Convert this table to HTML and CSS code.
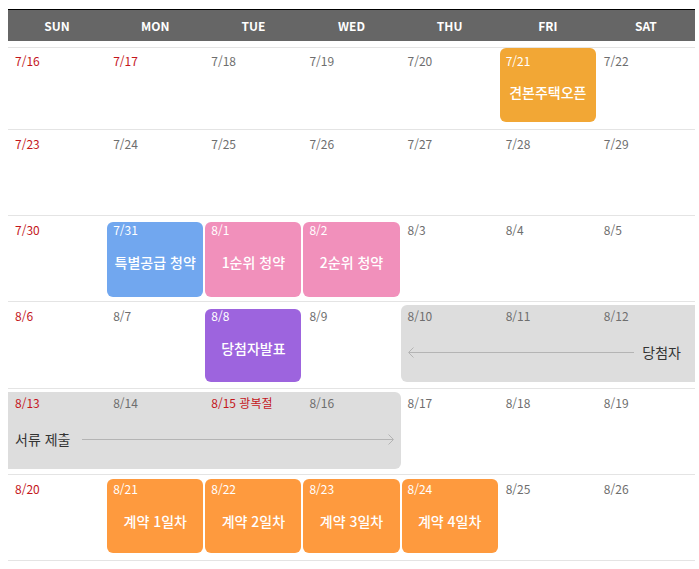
FILE: index.html
```html
<!DOCTYPE html>
<html lang="ko">
<head>
<meta charset="utf-8">
<title>일정</title>
<link rel="stylesheet" href="styles.css">
</head>
<body>
<div class="cal">
  <div class="head">
    <div>SUN</div><div>MON</div><div>TUE</div><div>WED</div><div>THU</div><div>FRI</div><div>SAT</div>
  </div>

  <div class="week w1">
    <div class="box c6 gold"></div>
    <div class="days">
      <div class="day red">7/16</div>
      <div class="day red">7/17</div>
      <div class="day">7/18</div>
      <div class="day">7/19</div>
      <div class="day">7/20</div>
      <div class="day ev"><span class="date">7/21</span><span class="title">견본주택오픈</span></div>
      <div class="day">7/22</div>
    </div>
  </div>

  <div class="week w2">
    <div class="days">
      <div class="day red">7/23</div>
      <div class="day">7/24</div>
      <div class="day">7/25</div>
      <div class="day">7/26</div>
      <div class="day">7/27</div>
      <div class="day">7/28</div>
      <div class="day">7/29</div>
    </div>
  </div>

  <div class="week w3">
    <div class="box c2 blue"></div>
    <div class="box c3 pink"></div>
    <div class="box c4 pink"></div>
    <div class="days">
      <div class="day red">7/30</div>
      <div class="day ev"><span class="date">7/31</span><span class="title">특별공급 청약</span></div>
      <div class="day ev"><span class="date">8/1</span><span class="title">1순위 청약</span></div>
      <div class="day ev"><span class="date">8/2</span><span class="title">2순위 청약</span></div>
      <div class="day">8/3</div>
      <div class="day">8/4</div>
      <div class="day">8/5</div>
    </div>
  </div>

  <div class="week w4">
    <div class="box c3 purple"></div>
    <div class="bar bar-right">
      <div class="arrow">
        <svg class="head-l" width="6" height="11" viewBox="0 0 6 11"><polyline points="5.5,0.5 0.5,5.5 5.5,10.5" fill="none" stroke="#b4b4b4" stroke-width="1"/></svg>
        <div class="ln ln-l"></div>
      </div>
      <span class="label label-r">당첨자</span>
    </div>
    <div class="days">
      <div class="day red">8/6</div>
      <div class="day">8/7</div>
      <div class="day ev"><span class="date">8/8</span><span class="title">당첨자발표</span></div>
      <div class="day">8/9</div>
      <div class="day">8/10</div>
      <div class="day">8/11</div>
      <div class="day">8/12</div>
    </div>
  </div>

  <div class="week w5">
    <div class="bar bar-left">
      <span class="label">서류 제출</span>
      <div class="arrow arrow-r">
        <div class="ln ln-r"></div>
        <svg class="head-r" width="6" height="11" viewBox="0 0 6 11"><polyline points="0.5,0.5 5.5,5.5 0.5,10.5" fill="none" stroke="#b4b4b4" stroke-width="1"/></svg>
      </div>
    </div>
    <div class="days">
      <div class="day red">8/13</div>
      <div class="day">8/14</div>
      <div class="day red">8/15 광복절</div>
      <div class="day">8/16</div>
      <div class="day">8/17</div>
      <div class="day">8/18</div>
      <div class="day">8/19</div>
    </div>
  </div>

  <div class="week w6">
    <div class="box c2 orange"></div>
    <div class="box c3 orange"></div>
    <div class="box c4 orange"></div>
    <div class="box c5 orange"></div>
    <div class="days">
      <div class="day red">8/20</div>
      <div class="day ev"><span class="date">8/21</span><span class="title">계약 1일차</span></div>
      <div class="day ev"><span class="date">8/22</span><span class="title">계약 2일차</span></div>
      <div class="day ev"><span class="date">8/23</span><span class="title">계약 3일차</span></div>
      <div class="day ev"><span class="date">8/24</span><span class="title">계약 4일차</span></div>
      <div class="day">8/25</div>
      <div class="day">8/26</div>
    </div>
  </div>
</div>
</body>
</html>
```

FILE: styles.css
```css
html, body {
  margin: 0;
  padding: 0;
  background: #fff;
  overflow: hidden;
}
body {
  padding: 9px 0 0 8px;
  font-family: "Noto Sans CJK KR", "Noto Sans", sans-serif;
}
.cal {
  width: 687px;
}
.head {
  display: grid;
  grid-template-columns: repeat(7, 1fr);
  background: #666;
  border-top: 1px solid #000;
  height: 31px;
  margin-bottom: 6px;
}
.head div {
  color: #fff;
  font-weight: 700;
  font-size: 12px;
  line-height: 31px;
  text-align: center;
}
.week {
  display: grid;
  grid-template-columns: repeat(7, 1fr);
  grid-template-rows: 85px;
  border-top: 1px solid #e4e4e4;
}
.w1 { grid-template-rows: 81px; }
.w4 { grid-template-rows: 86px; }
.w6 { border-bottom: 1px solid #e4e4e4; }

.days {
  grid-row: 1;
  grid-column: 1 / 8;
  display: grid;
  grid-template-columns: repeat(7, 1fr);
  position: relative;
  z-index: 1;
}
.w1 .days { margin-top: -1px; }
.day {
  padding: 6px 7px 0;
  font-size: 12px;
  line-height: 16px;
  color: #6e6e6e;
  white-space: nowrap;
}
.day.red { color: #c4161c; }
.day.ev { color: #fff; }
.date { display: block; }
.title {
  display: block;
  margin: 14px -7px 0;
  text-align: center;
  font-size: 14px;
  line-height: 20px;
  font-weight: 500;
  color: #fff;
}
.w1 .title { margin-top: 13px; }

.box {
  grid-row: 1;
  align-self: start;
  border-radius: 6px;
  margin: 4px 1px 0 1px;
  height: 74px;
}
.w1 .box { margin-top: 0; }
.w3 .box { margin-top: 6px; height: 75px; }
.w4 .box { margin-top: 7px; height: 73px; }
.c2 { grid-column: 2; }
.c3 { grid-column: 3; }
.c4 { grid-column: 4; }
.c5 { grid-column: 5; }
.c6 { grid-column: 6; }

.gold { background: #f2a735; }
.blue { background: #71a7ef; }
.pink { background: #f190bb; }
.purple { background: #9d64de; }
.orange { background: #fe9a3e; }

.bar {
  grid-row: 1;
  align-self: start;
  margin-top: 3px;
  height: 77px;
  box-sizing: border-box;
  background: #dddddd;
  display: flex;
  align-items: center;
  align-content: flex-start;
  flex-wrap: wrap;
  padding-top: 37px;
}
.bar-right {
  grid-column: 5 / 8;
  border-radius: 6px 0 0 6px;
  padding-left: 7px;
  padding-right: 14px;
  flex-wrap: nowrap;
  align-items: flex-start;
}
.bar-left {
  grid-column: 1 / 5;
  border-radius: 0 6px 6px 0;
  padding-left: 7px;
  padding-right: 7px;
  flex-wrap: nowrap;
  align-items: flex-start;
}
.label {
  font-size: 14px;
  line-height: 20px;
  color: #333;
  white-space: nowrap;
}
.label-r { margin-left: 8px; }
.arrow {
  flex: 1;
  display: flex;
  align-items: center;
  height: 11px;
  margin-top: 5px;
}
.arrow-r { margin-left: 12px; }
.arrow svg { display: block; flex: none; }
.ln {
  flex: 1;
  height: 1px;
  background: #b4b4b4;
}
.ln-l { margin-left: -5px; }
.ln-r { margin-right: -5px; }
```
